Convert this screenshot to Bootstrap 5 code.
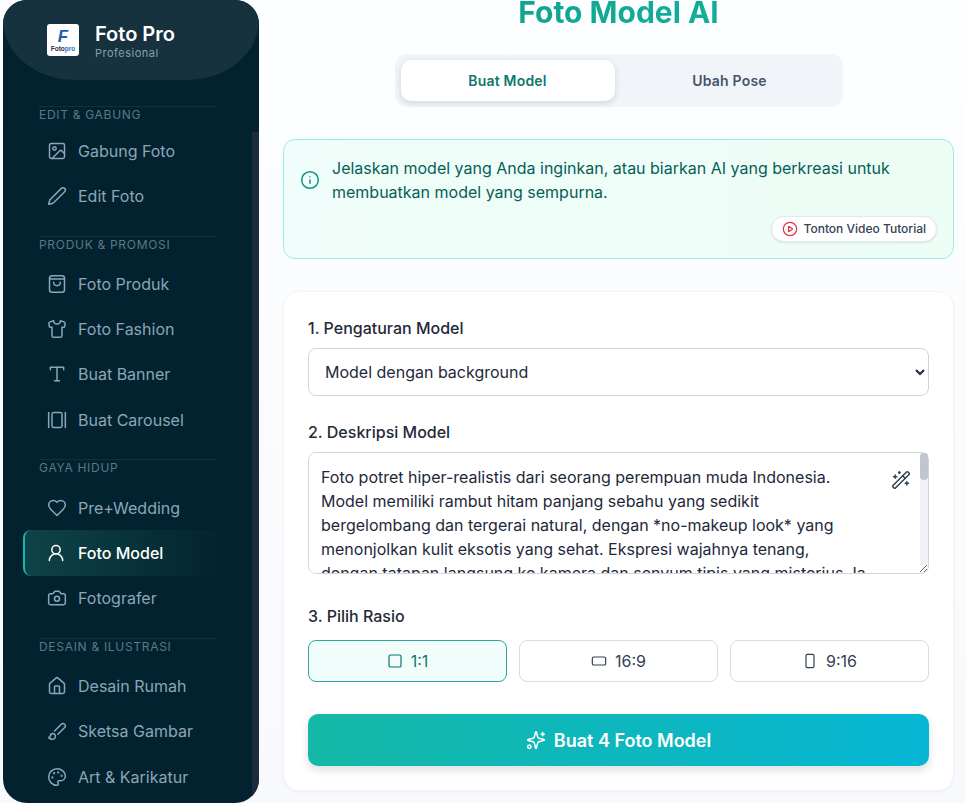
<!DOCTYPE html>
<html lang="id">
<head>
  <meta charset="UTF-8">
  <title>Foto Model AI</title>
  <link href="https://cdn.jsdelivr.net/npm/bootstrap@5.3.3/dist/css/bootstrap.min.css" rel="stylesheet">
  <style>
    html, body { height: 803px; overflow: hidden; }
    body { background: linear-gradient(180deg, #fdfeff, #f7f9fc); font-family: Inter, "Liberation Sans", sans-serif; color: #1e293b; }
    svg.ico { fill: none; stroke: currentColor; stroke-width: 1.8; stroke-linecap: round; stroke-linejoin: round; flex-shrink: 0; }

    .side-panel { width: 256px; margin-left: 3px; height: 803px; background: #03222f; border-radius: 24px; overflow: hidden; flex-shrink: 0; position: relative; }
    .side-head { height: 80px; background: #16323f; border-radius: 0 0 72px 72px / 0 0 60px 60px; padding: 24px 0 0 44px; gap: 16px; }
    .logo-box { width: 32px; height: 32px; background: #fff; border-radius: 3px; line-height: 1; }
    .logo-f { font: italic 700 17px/17px "Liberation Sans", sans-serif; color: #1d5fa8; }
    .logo-word { font: 700 6.5px/7px "Liberation Sans", sans-serif; color: #1f2f55; }
    .logo-word span { color: #2f6fc0; }
    .brand-name { color: #fff; font-weight: 600; font-size: 20px; line-height: 20px; }
    .brand-sub { color: #84a0b3; font-size: 11px; line-height: 16px; letter-spacing: .5px; margin-top: 1px; }
    .side-nav { padding: 26px 43px 0 36px; }
    .group-title { border-top: 1px solid #12303e; color: #5b7888; font-size: 12px; line-height: 16px; letter-spacing: .7px; height: 26px; margin-top: 17px; }
    .group-title.top-group { height: 22px; margin-top: 0; }
    .group-title.second-group { height: 25px; margin-top: 18px; }
    .side-link { color: #8ca5b8; font-size: 16px; line-height: 24px; height: 45.2px; gap: 11px; text-decoration: none; padding-left: 8px; }
    .side-link.on { color: #fff; font-weight: 500; margin-left: -16px; padding-left: 21px; gap: 12px; margin-right: -10px; background: linear-gradient(90deg, #0e4447, rgba(3,34,47,0)); border-left: 2px solid #14b8a6; border-radius: 8px 0 0 8px; }
    .side-track { position: absolute; right: 0; top: 132px; bottom: 0; width: 7px; background: #1c2c3c; }

    .main-area { padding: 0 12px 0 24px; min-width: 0; }
    .page-title { font-size: 30px; line-height: 24px; font-weight: 700; text-align: center; margin: 0 0 30px; background: linear-gradient(90deg, #0f9b84, #14b8a6); -webkit-background-clip: text; background-clip: text; color: transparent; }
    .mode-tabs { width: 448px; height: 53px; background: #f1f5f9; border-radius: 12px; padding: 6px; margin: 0 auto 32px; gap: 8px; }
    .mode-tab { flex: 1 1 0; border: 0; background: transparent; border-radius: 10px; font-size: 14px; font-weight: 600; color: #475569; padding: 0; letter-spacing: .2px; }
    .mode-tab.on { background: #fff; color: #0f766e; box-shadow: 0 2px 6px rgba(15,23,42,.14); }
    .tip-box { height: 120px; background: linear-gradient(90deg, #f0fdfa, #ecfdf5); border: 1px solid #99f0e0; border-radius: 12px; padding: 16px 16px 0; margin-bottom: 32px; color: #065f56; }
    .tip-text { font-size: 16px; line-height: 24px; margin-left: 12px; color: #065f56; }
    .tip-icon { color: #0d9488; }
    .video-row { margin-top: 12px; }
    .video-btn { height: 26px; background: #fff; border: 1px solid #e2e8f0; border-radius: 13px; font-size: 12px; font-weight: 500; color: #334155; padding: 0 10px; gap: 6px; box-shadow: 0 1px 2px rgba(15,23,42,.1); }
    .form-panel { height: 500px; background: #fff; border: 1px solid #f1f5f9; border-radius: 16px; padding: 24px; box-shadow: 0 1px 3px rgba(15,23,42,.05); }
    .field-label { font-size: 16px; font-weight: 500; line-height: 24px; color: #1f2937; margin-bottom: 8px; display: block; }
    .model-select { height: 48px; border-radius: 8px; border-color: #d1d5db; color: #1e293b; padding-left: 12px; margin-bottom: 24px; font-size: 16px; appearance: auto; background-image: none; }
    .prompt-wrap { position: relative; margin-bottom: 30px; }
    .prompt-box { height: 122px; border-radius: 8px; border-color: #d1d5db; padding: 12px 48px 0 12px; font-size: 16px; line-height: 24px; color: #1e293b; display: block; }
    .prompt-bar { position: absolute; right: 1px; top: 1px; width: 8px; height: 112px; background: #f1f2f9; }
    .prompt-thumb { height: 27px; background: #c1c5cf; border-radius: 4px; }
    .wand-btn { position: absolute; right: 18px; top: 18px; color: #334155; line-height: 0; }
    .ratio-row { gap: 12px; margin-top: 12px; margin-bottom: 32px; }
    .ratio-btn { flex: 1 1 0; height: 42px; background: #fff; border: 1px solid #d8dde5; border-radius: 8px; font-size: 16px; color: #334155; gap: 8px; padding: 0; }
    .ratio-btn.on { background: #f0fdfa; border-color: #2aa89b; color: #0f766e; }
    .make-btn { width: 100%; height: 52px; border: 0; border-radius: 10px; background: linear-gradient(90deg, #14b8a6, #06b6d4); color: #fff; font-size: 18px; font-weight: 600; gap: 8px; box-shadow: 0 4px 8px rgba(15,23,42,.14); }
  </style>
</head>
<body>
<div class="d-flex">
  <aside class="side-panel">
    <div class="side-head d-flex align-items-start">
      <div class="logo-box d-flex flex-column align-items-center justify-content-center">
        <span class="logo-f">F</span>
        <span class="logo-word">Foto<span>pro</span></span>
      </div>
      <div>
        <div class="brand-name">Foto Pro</div>
        <div class="brand-sub">Profesional</div>
      </div>
    </div>
    <nav class="side-nav">
      <div class="group-title top-group">EDIT &amp; GABUNG</div>
      <a class="side-link d-flex align-items-center" href="#"><svg class="ico" width="20" height="20" viewBox="0 0 24 24"><rect x="3" y="3" width="18" height="18" rx="2"/><circle cx="9" cy="9" r="2"/><path d="m21 15-3.086-3.086a2 2 0 0 0-2.828 0L6 21"/></svg>Gabung Foto</a>
      <a class="side-link d-flex align-items-center" href="#"><svg class="ico" width="20" height="20" viewBox="0 0 24 24"><path d="M21.174 6.812a1 1 0 0 0-3.986-3.987L3.842 16.174a2 2 0 0 0-.5.83l-1.321 4.352a.5.5 0 0 0 .623.622l4.353-1.32a2 2 0 0 0 .83-.497z"/></svg>Edit Foto</a>
      <div class="group-title second-group">PRODUK &amp; PROMOSI</div>
      <a class="side-link d-flex align-items-center" href="#"><svg class="ico" width="20" height="20" viewBox="0 0 24 24"><rect x="3" y="2" width="18" height="20" rx="3"/><path d="M3 6h18"/><path d="M16 10a4 4 0 0 1-8 0"/></svg>Foto Produk</a>
      <a class="side-link d-flex align-items-center" href="#"><svg class="ico" width="20" height="20" viewBox="0 0 24 24"><path d="M20.38 3.46 16 2a4 4 0 0 1-8 0L3.62 3.46a2 2 0 0 0-1.34 2.23l.58 3.47a1 1 0 0 0 .99.84H6v10c0 1.1.9 2 2 2h8a2 2 0 0 0 2-2V10h2.15a1 1 0 0 0 .99-.84l.58-3.47a2 2 0 0 0-1.34-2.23z"/></svg>Foto Fashion</a>
      <a class="side-link d-flex align-items-center" href="#"><svg class="ico" width="20" height="20" viewBox="0 0 24 24"><path d="M4 7V4h16v3"/><path d="M9 20h6"/><path d="M12 4v16"/></svg>Buat Banner</a>
      <a class="side-link d-flex align-items-center" href="#"><svg class="ico" width="20" height="20" viewBox="0 0 24 24"><path d="M2 3v18"/><rect x="6" y="3" width="12" height="18" rx="2"/><path d="M22 3v18"/></svg>Buat Carousel</a>
      <div class="group-title">GAYA HIDUP</div>
      <a class="side-link d-flex align-items-center" href="#"><svg class="ico" width="20" height="20" viewBox="0 0 24 24"><path d="M19 14c1.49-1.46 3-3.21 3-5.5A5.5 5.5 0 0 0 16.5 3c-1.76 0-3 .5-4.5 2-1.5-1.5-2.74-2-4.5-2A5.5 5.5 0 0 0 2 8.5c0 2.3 1.5 4.05 3 5.5l7 7Z"/></svg>Pre+Wedding</a>
      <a class="side-link on d-flex align-items-center" href="#"><svg class="ico" width="20" height="20" viewBox="0 0 24 24"><circle cx="12" cy="8" r="5"/><path d="M20 21a8 8 0 0 0-16 0"/></svg>Foto Model</a>
      <a class="side-link d-flex align-items-center" href="#"><svg class="ico" width="20" height="20" viewBox="0 0 24 24"><path d="M14.5 4h-5L7 7H4a2 2 0 0 0-2 2v9a2 2 0 0 0 2 2h16a2 2 0 0 0 2-2V9a2 2 0 0 0-2-2h-3l-2.5-3z"/><circle cx="12" cy="13" r="3"/></svg>Fotografer</a>
      <div class="group-title">DESAIN &amp; ILUSTRASI</div>
      <a class="side-link d-flex align-items-center" href="#"><svg class="ico" width="20" height="20" viewBox="0 0 24 24"><path d="M15 21v-8a1 1 0 0 0-1-1h-4a1 1 0 0 0-1 1v8"/><path d="M3 10a2 2 0 0 1 .709-1.528l7-5.999a2 2 0 0 1 2.582 0l7 5.999A2 2 0 0 1 21 10v9a2 2 0 0 1-2 2H5a2 2 0 0 1-2-2z"/></svg>Desain Rumah</a>
      <a class="side-link d-flex align-items-center" href="#"><svg class="ico" width="20" height="20" viewBox="0 0 24 24"><path d="m9.06 11.9 8.07-8.06a2.85 2.85 0 1 1 4.03 4.03l-8.06 8.08"/><path d="M7.07 14.94c-1.66 0-3 1.35-3 3.02 0 1.33-2.5 1.52-2 2.02 1.08 1.1 2.49 2.02 4 2.02 2.2 0 4-1.8 4-4.04a3.01 3.01 0 0 0-3-3.02z"/></svg>Sketsa Gambar</a>
      <a class="side-link d-flex align-items-center" href="#"><svg class="ico" width="20" height="20" viewBox="0 0 24 24"><circle cx="13.5" cy="6.5" r=".5"/><circle cx="17.5" cy="10.5" r=".5"/><circle cx="8.5" cy="7.5" r=".5"/><circle cx="6.5" cy="12.5" r=".5"/><path d="M12 2C6.5 2 2 6.5 2 12s4.5 10 10 10c.926 0 1.648-.746 1.648-1.688 0-.437-.18-.835-.437-1.125-.29-.289-.438-.652-.438-1.125a1.64 1.64 0 0 1 1.668-1.668h1.996c3.051 0 5.555-2.503 5.555-5.554C21.965 6.012 17.461 2 12 2z"/></svg>Art &amp; Karikatur</a>
    </nav>
    <div class="side-track"></div>
  </aside>

  <main class="main-area flex-grow-1">
    <h1 class="page-title">Foto Model AI</h1>
    <div class="mode-tabs d-flex">
      <button class="mode-tab on" type="button">Buat Model</button>
      <button class="mode-tab" type="button">Ubah Pose</button>
    </div>

    <div class="tip-box">
      <div class="d-flex align-items-center">
        <svg class="ico tip-icon" width="20" height="20" viewBox="0 0 24 24"><circle cx="12" cy="12" r="10"/><path d="M12 16v-4"/><path d="M12 8h.01"/></svg>
        <p class="tip-text mb-0">Jelaskan model yang Anda inginkan, atau biarkan AI yang berkreasi untuk membuatkan model yang sempurna.</p>
      </div>
      <div class="video-row d-flex justify-content-end">
        <button class="video-btn d-flex align-items-center" type="button"><svg class="ico text-danger" width="16" height="16" viewBox="0 0 24 24"><circle cx="12" cy="12" r="10"/><path d="m10 8 6 4-6 4z"/></svg>Tonton Video Tutorial</button>
      </div>
    </div>

    <div class="form-panel">
      <label class="field-label">1. Pengaturan Model</label>
      <select class="form-select model-select">
        <option>Model dengan background</option>
      </select>
      <label class="field-label">2. Deskripsi Model</label>
      <div class="prompt-wrap">
        <textarea class="form-control prompt-box">Foto potret hiper-realistis dari seorang perempuan muda Indonesia.
Model memiliki rambut hitam panjang sebahu yang sedikit
bergelombang dan tergerai natural, dengan *no-makeup look* yang
menonjolkan kulit eksotis yang sehat. Ekspresi wajahnya tenang,
dengan tatapan langsung ke kamera dan senyum tipis yang misterius. Ia
mengenakan kemeja linen putih sederhana, berdiri di ruang studio dengan cahaya alami yang lembut dari samping.</textarea>
        <div class="prompt-bar"><div class="prompt-thumb"></div></div>
        <span class="wand-btn"><svg class="ico" width="20" height="20" viewBox="0 0 24 24"><path d="m21.64 3.64-1.28-1.28a1.21 1.21 0 0 0-1.72 0L2.36 18.64a1.21 1.21 0 0 0 0 1.72l1.28 1.28a1.2 1.2 0 0 0 1.72 0L21.64 5.36a1.2 1.2 0 0 0 0-1.72"/><path d="m14 7 3 3"/><path d="M5 6v4"/><path d="M19 14v4"/><path d="M10 2v2"/><path d="M7 8H3"/><path d="M21 16h-4"/><path d="M11 3H9"/></svg></span>
      </div>
      <label class="field-label mb-0">3. Pilih Rasio</label>
      <div class="ratio-row d-flex">
        <button class="ratio-btn on d-flex align-items-center justify-content-center" type="button"><svg class="ico" width="16" height="16" viewBox="0 0 24 24"><rect x="3" y="3" width="18" height="18" rx="2"/></svg>1:1</button>
        <button class="ratio-btn d-flex align-items-center justify-content-center" type="button"><svg class="ico" width="16" height="16" viewBox="0 0 24 24"><rect x="2" y="6" width="20" height="12" rx="2"/></svg>16:9</button>
        <button class="ratio-btn d-flex align-items-center justify-content-center" type="button"><svg class="ico" width="16" height="16" viewBox="0 0 24 24"><rect x="6" y="2" width="12" height="20" rx="2"/></svg>9:16</button>
      </div>
      <button class="make-btn d-flex align-items-center justify-content-center" type="button"><svg class="ico" width="20" height="20" viewBox="0 0 24 24"><path d="M9.937 15.5A2 2 0 0 0 8.5 14.063l-6.135-1.582a.5.5 0 0 1 0-.962L8.5 9.936A2 2 0 0 0 9.937 8.5l1.582-6.135a.5.5 0 0 1 .963 0L14.063 8.5A2 2 0 0 0 15.5 9.937l6.135 1.581a.5.5 0 0 1 0 .964L15.5 14.063a2 2 0 0 0-1.437 1.437l-1.582 6.135a.5.5 0 0 1-.963 0z"/><path d="M20 3v4"/><path d="M22 5h-4"/><circle cx="4" cy="20" r="2"/></svg>Buat 4 Foto Model</button>
    </div>
  </main>
</div>
<script src="https://cdn.jsdelivr.net/npm/bootstrap@5.3.3/dist/js/bootstrap.bundle.min.js"></script>
</body>
</html>
